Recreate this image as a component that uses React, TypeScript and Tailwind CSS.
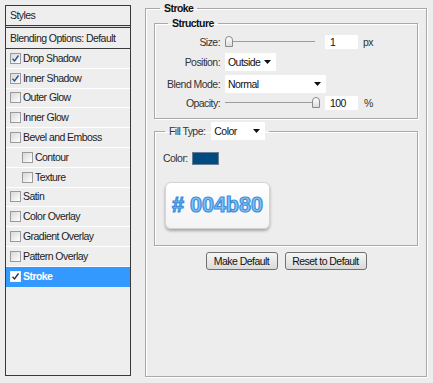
const FONT = "font-['Tahoma','Liberation_Sans',Arial,sans-serif]";

const styleItems = [
  { label: 'Drop Shadow', checked: true },
  { label: 'Inner Shadow', checked: true },
  { label: 'Outer Glow' },
  { label: 'Inner Glow' },
  { label: 'Bevel and Emboss' },
  { label: 'Contour', indent: true },
  { label: 'Texture', indent: true },
  { label: 'Satin' },
  { label: 'Color Overlay' },
  { label: 'Gradient Overlay' },
  { label: 'Pattern Overlay' },
  { label: 'Stroke', checked: true, active: true },
];

function Check({ checked, active }: { checked?: boolean; active?: boolean }) {
  return (
    <span
      className={`flex h-[11px] w-[11px] shrink-0 items-center justify-center border ${
        active ? 'border-[#e8f2ff] bg-white' : 'border-[#9a9a9a] bg-gradient-to-br from-[#d8d8d8] to-white'
      }`}
    >
      {checked && (
        <svg width="9" height="9" viewBox="0 0 9 9">
          <path d="M1.5 4.8 L3.5 7 L7.5 1.5" fill="none" stroke={active ? '#333' : '#2b4f9e'} strokeWidth="1.4" />
        </svg>
      )}
    </span>
  );
}

function StyleRow({ label, checked, indent, active }: { label: string; checked?: boolean; indent?: boolean; active?: boolean }) {
  return (
    <div
      className={`flex h-[19.8px] items-center gap-[2px] border-b ${
        active ? 'border-[#3399ff] bg-[#3399ff] font-bold text-white' : 'border-white text-[#222]'
      } ${indent ? 'pl-[16px]' : 'pl-[4px]'}`}
    >
      <Check checked={checked} active={active} />
      <span>{label}</span>
    </div>
  );
}

function Slider({ pos }: { pos: number }) {
  return (
    <div className="relative h-[14px] w-[90px] shrink-0">
      <div className="absolute left-0 right-0 top-[6px] h-[2px] border-t border-[#9c9c9c] border-b-white" />
      <div
        className="absolute top-[1px] h-[11px] w-[8px] rounded-t-[4px] border border-[#8a8a8a] bg-gradient-to-b from-white to-[#dcdcdc]"
        style={{ left: pos }}
      />
    </div>
  );
}

function Select({ value, width }: { value: string; width: string }) {
  return (
    <div className={`flex h-[18px] ${width} shrink-0 items-center justify-between bg-white pl-[3px] pr-[5px] text-[#111]`}>
      <span>{value}</span>
      <svg width="7" height="4" viewBox="0 0 7 4">
        <path d="M0 0 H7 L3.5 4 Z" fill="#111" />
      </svg>
    </div>
  );
}

function NumBox({ value }: { value: string }) {
  return <div className="ml-[5px] flex h-[14px] w-[33px] shrink-0 items-center bg-white pl-[5px] text-[#111]">{value}</div>;
}

function Label({ children }: { children: React.ReactNode }) {
  return <span className="w-[65px] shrink-0 text-right text-[#333]">{children}:</span>;
}

export default function App() {
  return (
    <div className={`flex h-[383px] w-[433px] bg-[#ededed] text-[10.5px] leading-[13px] tracking-[-0.55px] ${FONT}`}>
      {/* styles list */}
      <div className="ml-[5px] mt-[5px] flex h-[371px] w-[126px] flex-col border border-[#3a3a3a] bg-[#eeeeee]">
        <div className="flex h-[20px] items-center border-b border-[#3a3a3a] pl-[4px] text-[#222]">Styles</div>
        <div className="h-[2px] border-b border-[#3a3a3a] bg-[#dcdcdc]" />
        <div className="flex h-[21px] items-center border-b border-[#3a3a3a] pl-[4px] text-[#222]">Blending Options: Default</div>
        {styleItems.map((it) => (
          <StyleRow key={it.label} {...it} />
        ))}
      </div>

      {/* stroke panel */}
      <fieldset className="ml-[14px] mt-[2px] h-[375px] w-[282px] border border-[#a9a9a9] px-[8px] shadow-[inset_1px_1px_0_white,1px_1px_0_white]">
        <legend className="ml-[6px] px-[4px] font-bold text-[#111]">Stroke</legend>

        <fieldset className="mt-[2px] h-[102px] w-[264px] border border-[#a9a9a9] shadow-[inset_1px_1px_0_white,1px_1px_0_white]">
          <legend className="ml-[13px] px-[4px] font-bold text-[#111]">Structure</legend>
          <div className="mt-[5px] flex flex-col gap-[4px]">
            <div className="flex h-[14px] items-center gap-[5px]">
              <Label>Size</Label>
              <Slider pos={0} />
              <NumBox value="1" />
              <span className="text-[#333]">px</span>
            </div>
            <div className="flex h-[18px] items-center gap-[5px]">
              <Label>Position</Label>
              <Select value="Outside" width="w-[51px]" />
            </div>
            <div className="flex h-[18px] items-center gap-[5px]">
              <Label>Blend Mode</Label>
              <Select value="Normal" width="w-[101px]" />
            </div>
            <div className="-mt-[1px] flex h-[14px] items-center gap-[5px]">
              <Label>Opacity</Label>
              <Slider pos={87} />
              <NumBox value="100" />
              <span className="ml-[1px] text-[#333]">%</span>
            </div>
          </div>
        </fieldset>

        <fieldset className="mt-[3px] h-[124px] w-[264px] border border-[#a9a9a9] px-[8px] shadow-[inset_1px_1px_0_white,1px_1px_0_white]">
          <legend className="ml-[2px] flex items-center gap-[6px] px-[4px]">
            <span className="text-[#333]">Fill Type:</span>
            <Select value="Color" width="w-[54px]" />
          </legend>
          <div className="mt-[12px] flex items-center gap-[4px]">
            <span className="text-[#333]">Color:</span>
            <div className="h-[13px] w-[27px] border border-[#6a7f95] bg-[#004b80]" />
          </div>
          <div className="ml-[2px] mt-[17px] flex h-[47px] w-[105px] items-center justify-center rounded-[6px] border border-[#d4d4d4] bg-gradient-to-b from-white to-[#f3f3f3] shadow-[0_2px_3px_rgba(0,0,0,0.3)]">
            <span className="font-['Liberation_Sans',Arial,sans-serif] text-[21.5px] font-bold leading-none tracking-normal text-[#86c3f5] [-webkit-text-stroke:1.2px_#3d8fdc]">
              # 004b80
            </span>
          </div>
        </fieldset>

        <div className="mt-[6px] flex justify-center gap-[7px] text-[#111]">
          <button className="h-[18px] w-[72px] rounded-[3px] border border-[#707070] bg-gradient-to-b from-[#f6f6f6] to-[#dadada]">
            Make Default
          </button>
          <button className="h-[18px] w-[82px] rounded-[3px] border border-[#707070] bg-gradient-to-b from-[#f6f6f6] to-[#dadada]">
            Reset to Default
          </button>
        </div>
      </fieldset>
    </div>
  );
}
